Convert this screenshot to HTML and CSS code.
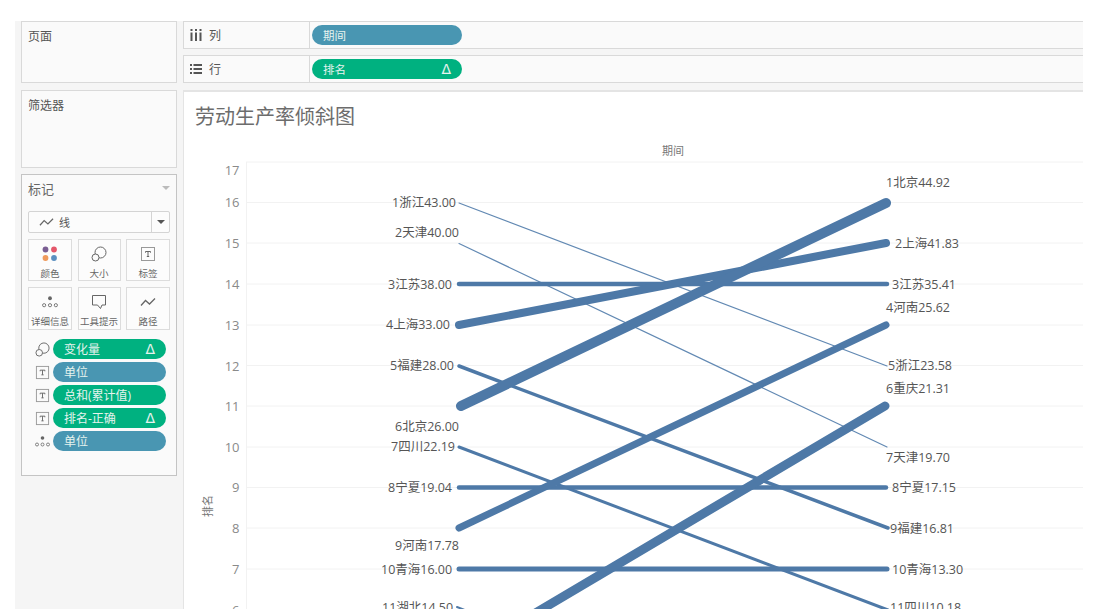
FILE: index.html
```html
<!DOCTYPE html>
<html lang="zh">
<head>
<meta charset="utf-8">
<title>劳动生产率倾斜图</title>
<link rel="stylesheet" href="styles.css">
</head>
<body>
<svg class="defs" width="0" height="0" aria-hidden="true">
  <symbol id="i-size" viewBox="0 0 16 16"><circle cx="9.500" cy="6.500" r="5.500" fill="none" stroke="#666"/><circle cx="4.500" cy="11.500" r="3.500" fill="#fafafa" stroke="#666"/></symbol>
  <symbol id="i-label" viewBox="-1 -1 16 16"><rect x=".5" y=".5" width="13" height="13" fill="none" stroke="#999"/><path d="M4.500 4.500h5M7 4.500v5M5.800 9.500h2.400M4.500 4.500v1.200M9.500 4.500v1.200" fill="none" stroke="#666"/></symbol>
  <symbol id="i-detail" viewBox="0 0 15 11"><circle cx="7.500" cy="2" r="1.800" fill="#666"/><circle cx="2" cy="8.500" r="1.500" fill="none" stroke="#666" stroke-width=".8"/><circle cx="7.500" cy="8.500" r="1.500" fill="none" stroke="#666" stroke-width=".8"/><circle cx="13" cy="8.500" r="1.500" fill="none" stroke="#666" stroke-width=".8"/></symbol>
  <symbol id="i-line" viewBox="0 0 16 10"><path d="M1 8.500L5.500 3.500L9.500 7L15 1.500" fill="none" stroke="#666" stroke-width="1.300"/></symbol>
</svg>
<div class="shell">
  <aside class="side">
    <section class="card card-pages"><h2 class="card-name">页面</h2></section>
    <section class="card card-filters"><h2 class="card-name">筛选器</h2></section>
    <section class="card card-marks">
      <div class="marks-head"><span class="marks-name">标记</span><span class="caret caret-light"></span></div>
      <div class="select">
        <div class="select-value"><svg class="select-icon"><use href="#i-line"/></svg><span>线</span></div>
        <div class="select-arrow"><span class="caret"></span></div>
      </div>
      <div class="btn-grid">
        <div class="btn">
          <svg class="btn-icon" viewBox="0 0 16 16"><circle cx="3.500" cy="3.500" r="2.900" fill="#7a5e93"/><circle cx="12" cy="3.500" r="2.900" fill="#e4576a"/><circle cx="3.500" cy="12" r="2.900" fill="#ef9a5c"/><circle cx="12" cy="12" r="2.900" fill="#5b8fc0"/></svg>
          <span>颜色</span>
        </div>
        <div class="btn"><svg class="btn-icon"><use href="#i-size"/></svg><span>大小</span></div>
        <div class="btn"><svg class="btn-icon"><use href="#i-label"/></svg><span>标签</span></div>
        <div class="btn"><svg class="btn-icon"><use href="#i-detail"/></svg><span>详细信息</span></div>
        <div class="btn">
          <svg class="btn-icon" viewBox="0 0 16 16"><path d="M1.500 1.500h13v9.500h-3.500l-1.500 3.500l-3-3.500h-5z" fill="none" stroke="#666"/></svg>
          <span>工具提示</span>
        </div>
        <div class="btn"><svg class="btn-icon"><use href="#i-line"/></svg><span>路径</span></div>
      </div>
      <ul class="encodings">
        <li class="enc"><svg class="enc-icon"><use href="#i-size"/></svg><div class="pill pill-green"><span>变化量</span><span class="delta">Δ</span></div></li>
        <li class="enc"><svg class="enc-icon"><use href="#i-label"/></svg><div class="pill pill-blue"><span>单位</span></div></li>
        <li class="enc"><svg class="enc-icon"><use href="#i-label"/></svg><div class="pill pill-green"><span>总和(累计值)</span></div></li>
        <li class="enc"><svg class="enc-icon"><use href="#i-label"/></svg><div class="pill pill-green"><span>排名-正确</span><span class="delta">Δ</span></div></li>
        <li class="enc"><svg class="enc-icon"><use href="#i-detail"/></svg><div class="pill pill-blue"><span>单位</span></div></li>
      </ul>
    </section>
  </aside>
  <main class="main">
    <div class="shelf">
      <div class="shelf-name">
        <svg class="shelf-icon" viewBox="0 0 12 12"><path d="M1.500 0v2M6 0v2M10.500 0v2M1.500 3.500V12M6 3.500V12M10.500 3.500V12" stroke="#555" stroke-width="2"/></svg>
        <span>列</span>
      </div>
      <div class="shelf-body"><div class="pill pill-blue pill-shelf"><span>期间</span></div></div>
    </div>
    <div class="shelf">
      <div class="shelf-name">
        <svg class="shelf-icon" viewBox="0 0 12 12"><path d="M0 2h2M3.500 2H12M0 6h2M3.500 6H12M0 10h2M3.500 10H12" stroke="#555" stroke-width="1.800"/></svg>
        <span>行</span>
      </div>
      <div class="shelf-body"><div class="pill pill-green pill-shelf"><span>排名</span><span class="delta">Δ</span></div></div>
    </div>
    <section class="view">
      <h1 class="view-title">劳动生产率倾斜图</h1>
      <svg class="chart" viewBox="183 140 900 469" width="900" height="469">
        <g class="grid">
          <path d="M246 162H1083M246 202.500H1083M246 243H1083M246 284H1083M246 325H1083M246 365.500H1083M246 406H1083M246 447H1083M246 487.500H1083M246 528H1083M246 569H1083M246.500 162V609"/>
        </g>
        <g class="ticks">
          <text x="239.500" y="175">17</text><text x="239.500" y="207">16</text><text x="239.500" y="248">15</text><text x="239.500" y="289">14</text><text x="239.500" y="330">13</text><text x="239.500" y="371">12</text><text x="239.500" y="411">11</text><text x="239.500" y="452">10</text><text x="239.500" y="492">9</text><text x="239.500" y="533">8</text><text x="239.500" y="574">7</text><text x="239.500" y="615">6</text>
        </g>
        <text class="axis-top" x="673" y="155">期间</text>
        <text class="axis-left" transform="translate(212 506) rotate(-90)">排名</text>
        <g class="lines">
          <path class="thin" d="M459 203L887 366"/>
          <path class="thin" d="M459 243.500L887 447"/>
          <path d="M459 284H887" stroke-width="4.500"/>
          <path d="M459 325L886 243" stroke-width="8"/>
          <path d="M459 366L888 528" stroke-width="3.500"/>
          <path d="M461 406L886 203" stroke-width="10"/>
          <path d="M459 447L888 610" stroke-width="3"/>
          <path d="M459 487.500H886" stroke-width="4.500"/>
          <path d="M459 528L886 325" stroke-width="7"/>
          <path d="M459 569H887" stroke-width="5"/>
          <path d="M457 607L470 612" stroke-width="2"/>
          <path d="M500 634L885 406" stroke-width="9"/>
        </g>
        <g class="labels">
          <text x="392" y="207">1浙江43.00</text>
          <text x="395" y="237">2天津40.00</text>
          <text x="388" y="289">3江苏38.00</text>
          <text x="386" y="329">4上海33.00</text>
          <text x="390" y="370">5福建28.00</text>
          <text x="395" y="431">6北京26.00</text>
          <text x="391" y="451">7四川22.19</text>
          <text x="388" y="492">8宁夏19.04</text>
          <text x="395" y="550">9河南17.78</text>
          <text x="381" y="574">10青海16.00</text>
          <text x="382" y="612">11湖北14.50</text>
          <text x="886" y="187">1北京44.92</text>
          <text x="895" y="248">2上海41.83</text>
          <text x="892" y="289">3江苏35.41</text>
          <text x="886" y="312">4河南25.62</text>
          <text x="888" y="370">5浙江23.58</text>
          <text x="886" y="393">6重庆21.31</text>
          <text x="886" y="462">7天津19.70</text>
          <text x="892" y="492">8宁夏17.15</text>
          <text x="890" y="533">9福建16.81</text>
          <text x="892" y="574">10青海13.30</text>
          <text x="890" y="612">11四川10.18</text>
        </g>
      </svg>
    </section>
  </main>
</div>
</body>
</html>
```

FILE: styles.css
```css
* { box-sizing: border-box; }
html, body { margin: 0; padding: 0; background: #fff; overflow: hidden; }
body {
  width: 1093px;
  height: 609px;
  font-family: "Open Sans", "Noto Sans CJK SC", sans-serif;
  color: #555;
}
.defs { position: absolute; }
.shell {
  display: flex;
  gap: 6px;
  width: 1068px;
  height: 588px;
  margin: 21px 0 0 15px;
  padding-left: 6px;
  background: #f5f5f5;
  overflow: hidden;
}
.side { display: flex; flex-direction: column; width: 156px; flex: none; }
.card { background: #fafafa; border: 1px solid #d9d9d9; }
.card-pages { height: 62px; padding: 7px 6px; }
.card-filters { height: 78px; margin-top: 7px; padding: 7px 6px; }
.card-marks { height: 302px; margin-top: 6px; border-color: #c4c4c4; padding: 4px 6px; }
.card-name { margin: 0; font-size: 12px; line-height: 16px; font-weight: 400; color: #555; }
.marks-head { display: flex; justify-content: space-between; align-items: center; height: 18px; }
.marks-name { font-size: 13px; color: #666; }
.caret { display: block; width: 0; height: 0; border-left: 4px solid transparent; border-right: 4px solid transparent; border-top: 4px solid #555; }
.caret-light { border-top-color: #bbb; }
.select {
  display: flex;
  width: 142px;
  height: 22px;
  margin-top: 14px;
  border: 1px solid #d4d4d4;
  border-radius: 2px;
  background: #fcfcfc;
}
.select-value { flex: 1; display: flex; align-items: center; gap: 5px; padding-left: 10px; font-size: 11px; }
.select-icon { width: 15px; height: 10px; }
.select-arrow { width: 18px; display: flex; align-items: center; justify-content: center; border-left: 1px solid #d4d4d4; }
.btn-grid {
  display: grid;
  grid-template-columns: 44px 43px 44px;
  grid-template-rows: 42px 43px;
  column-gap: 5.500px;
  row-gap: 6px;
  width: 142px;
  margin-top: 6px;
}
.btn {
  display: flex;
  flex-direction: column;
  align-items: center;
  padding-top: 6px;
  border: 1px solid #dcdcdc;
  background: #fcfcfc;
  font-size: 9.500px;
  line-height: 12px;
  color: #666;
  white-space: nowrap;
}
.btn-icon { width: 16px; height: 16px; margin-bottom: 6px; flex: none; }
.encodings { list-style: none; margin: 9px 0 0; padding: 0; display: flex; flex-direction: column; gap: 3px; }
.enc { display: flex; align-items: center; height: 20px; padding-left: 7px; }
.enc-icon { width: 15px; height: 15px; flex: none; margin-right: 3px; }
.pill {
  display: flex;
  align-items: center;
  justify-content: space-between;
  width: 113px;
  height: 20px;
  padding: 0 11px;
  border-radius: 10px;
  font-size: 12px;
  color: #e6f3ee;
  white-space: nowrap;
}
.pill-green { background: #00b180; }
.pill-blue { background: #4996b2; }
.pill-shelf { width: 150px; font-size: 11.500px; }
.delta { font-size: 14px; font-family: "DejaVu Sans", sans-serif; }
.main { display: flex; flex-direction: column; width: 900px; flex: none; }
.shelf {
  display: flex;
  height: 28px;
  margin-bottom: 6px;
  background: #fafafa;
  border: 1px solid #d9d9d9;
  border-right: none;
}
.shelf-name { display: flex; align-items: center; gap: 7px; width: 126px; padding-left: 6px; font-size: 12px; color: #555; border-right: 1px solid #d9d9d9; }
.shelf-icon { width: 12px; height: 12px; }
.shelf-body { flex: 1; display: flex; align-items: center; padding-left: 2px; }
.view {
  height: 519px;
  margin-top: 1px;
  background: #fff;
  border-top: 2px solid #e4e4e4;
  border-left: 1px solid #e4e4e4;
  overflow: hidden;
}
.view-title { height: 48px; margin: 0; padding: 11px 0 0 11px; font-size: 20px; line-height: 28px; font-weight: 400; color: #6c6c6c; }
.chart { display: block; margin-left: -1px; }
.grid path { fill: none; stroke: #f2f2f2; stroke-width: 1; }
.ticks text { text-anchor: end; font-size: 13px; fill: #8a8a8a; }
.axis-top { text-anchor: middle; font-size: 11px; fill: #777; }
.axis-left { text-anchor: middle; font-size: 11px; fill: #777; }
.lines path { fill: none; stroke: #4e79a7; stroke-linecap: round; }
.lines .thin { stroke: #6289b3; stroke-width: 1.200; }
.labels text { font-size: 12.500px; fill: #555; }
```
